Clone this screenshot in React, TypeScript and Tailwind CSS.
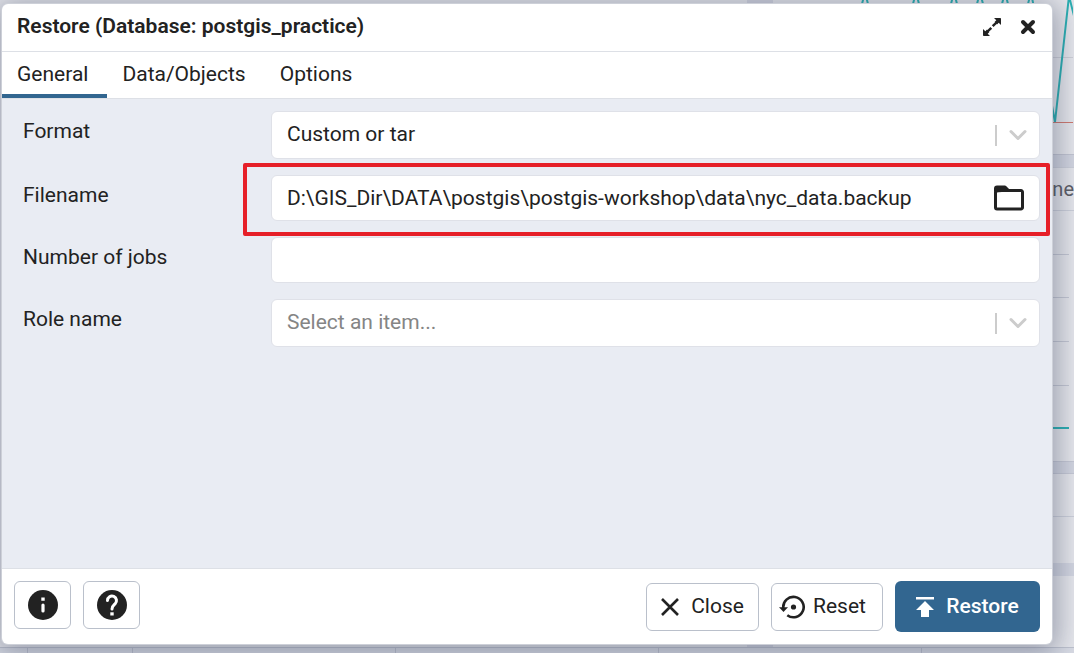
import { ReactNode } from 'react';

function Backdrop() {
  return (
    <div aria-hidden="true" className="absolute inset-0 overflow-hidden bg-[#e6e7ec]">
      <div className="absolute inset-y-0 right-0 flex w-[327px] flex-col border-l-[26px] border-[#d3d5e0]">
        <div className="relative h-[155px] shrink-0 border-b border-[#c3c6d2]">
          <svg className="absolute inset-0" width="300" height="154" fill="none">
            <path d="M0 57.500H300" stroke="#cfd0d8" />
            <path d="M0 122.500H300" stroke="#d0796f" />
            <path d="M89 4l3-12 3 12M140 4l3-12 3 12M178 4l3-12 3 12M204 4l3-12 3 12M229 4l3-12 3 12M255 4l3-12 24 130L296-4l10 40" stroke="#2bb0b3" strokeWidth="2" />
          </svg>
        </div>
        <div className="h-3 shrink-0 bg-[#d3d6e1]" />
        <div className="flex h-[44px] shrink-0 items-center justify-end border-y border-[#cdd0da] font-[Roboto,sans-serif] text-xl text-[#5d5e66]">
          Block out/Timeline
        </div>
        <svg className="shrink-0" width="300" height="250" fill="none">
          <path d="M0 43.500H296M0 86.500H296M0 130.500H296M0 174.500H296" stroke="#c5c8d3" />
          <path d="M0 217H296" stroke="#2bb0b3" strokeWidth="2" />
        </svg>
        <div className="h-[13px] shrink-0 border-y border-[#c6c9d5] bg-[#d3d6e1]" />
        <div className="h-[43px] shrink-0 border-b border-[#cdd0da]" />
        <div className="h-[46px] shrink-0" />
        <div className="h-[13px] shrink-0 bg-[#d3d6e1]" />
      </div>
      <div className="absolute inset-x-0 bottom-0 flex h-[6px] border-t border-[#bfc3cf] bg-[#d9dce5]">
        <div className="w-[28px] border-r border-[#bfc3cf]" />
        <div className="w-[105px] border-r border-[#bfc3cf]" />
        <div className="w-[263px] border-r border-[#bfc3cf]" />
        <div className="w-[263px] border-r border-[#bfc3cf]" />
        <div className="w-[263px] border-r border-[#bfc3cf]" />
      </div>
    </div>
  );
}

const field = 'w-full rounded-md border border-[#dfe1e8] bg-white px-[15px] text-[21px]';
const tab = 'border-b-4 pt-1 pr-[19px] pl-[15px]';

function Row({ id, label, children }: { id: string; label: string; children: ReactNode }) {
  return (
    <div className="grid grid-cols-[248px_1fr] items-start">
      <label htmlFor={id} className="pt-1 leading-8">{label}</label>
      {children}
    </div>
  );
}

function SelectField({ id, value, muted }: { id: string; value: string; muted?: boolean }) {
  return (
    <div className="relative">
      <select id={id} defaultValue={value} className={`${field} h-12 appearance-none ${muted ? 'text-[#858585]' : ''}`}>
        <option>{value}</option>
      </select>
      <div className="pointer-events-none absolute inset-y-0 right-[13px] flex items-center gap-3 text-[#cccccc]">
        <span className="h-[21px] w-[2px] bg-[#cccccc]" />
        <svg width="18" height="12" viewBox="0 0 18 12" fill="none" stroke="currentColor" strokeWidth="3" strokeLinecap="round" strokeLinejoin="round">
          <path d="M2 2.500l7 7 7-7" />
        </svg>
      </div>
    </div>
  );
}

export default function App() {
  return (
    <div className="relative flex min-h-screen flex-col overflow-hidden pt-1 pr-[22px] pb-[9px] pl-[2px] font-[Roboto,sans-serif] text-[21px] text-[#222222]">
      <Backdrop />
      <section role="dialog" aria-labelledby="dialog-title" className="relative flex flex-1 flex-col rounded-md bg-white shadow-[0_0_0_1px_#cdd0d8,0_4px_28px_6px_rgba(40,50,80,0.4)]">
        <header className="flex h-12 items-center border-b border-[#dde0e6] pr-4 pb-0.5 pl-[15px]">
          <h1 id="dialog-title" className="flex-1 font-semibold">Restore (Database: postgis_practice)</h1>
          <div className="flex items-center gap-[18px]">
            <button aria-label="Maximize">
              <svg width="20" height="20" viewBox="0 0 20 20" fill="currentColor">
                <path d="M12 1h6.200q.8 0 .8.800V8l-2.300-2.300-1.700 1.700-2.400-2.400 1.700-1.700z" />
                <path d="M8 19H1.800Q1 19 1 18.200V12l2.300 2.300 1.700-1.700 2.400 2.400-1.700 1.700z" />
                <path d="M14.200 4.200l1.600 1.600-4.200 4.200-1.800-1.800zM5.800 15.800l-1.600-1.600 4.200-4.200 1.800 1.800z" />
              </svg>
            </button>
            <button aria-label="Close dialog">
              <svg width="16" height="16" viewBox="0 0 16 16" fill="none" stroke="currentColor" strokeWidth="4" strokeLinecap="round">
                <path d="M3 3l10 10M13 3L3 13" />
              </svg>
            </button>
          </div>
        </header>
        <div role="tablist" className="flex h-[47px] border-b border-[#dde0e6]">
          <button role="tab" aria-selected="true" className={`${tab} border-[#326690]`}>General</button>
          <button role="tab" aria-selected="false" className={`${tab} border-transparent`}>Data/Objects</button>
          <button role="tab" aria-selected="false" className={`${tab} border-transparent`}>Options</button>
        </div>
        <main className="flex-1 bg-[#e9ecf3] pt-3 pr-3 pl-[21px]">
          <div className="flex flex-col gap-4">
            <Row id="format" label="Format"><SelectField id="format" value="Custom or tar" /></Row>
            <Row id="filename" label="Filename">
              <div className="relative">
                <input id="filename" defaultValue="D:\GIS_Dir\DATA\postgis\postgis-workshop\data\nyc_data.backup" className={`${field} h-[46px] pr-16`} />
                <button aria-label="Select file" className="absolute inset-y-0 right-[15px]">
                  <svg width="32" height="26" viewBox="0 0 32 26" fill="none" stroke="currentColor" strokeWidth="3" strokeLinejoin="round">
                    <path d="M4 5.500h24a1.500 1.500 0 0 1 1.500 1.500v15.500A1.500 1.500 0 0 1 28 24H4a1.500 1.500 0 0 1-1.500-1.500v-15.500Z" />
                    <path d="M2.500 6V3.500A1.500 1.500 0 0 1 4 2h8l3 3z" fill="currentColor" />
                  </svg>
                </button>
                <div className="pointer-events-none absolute -top-3 -right-[10px] -bottom-[15px] -left-7 rounded-xs border-4 border-[#e61f28]" />
              </div>
            </Row>
            <Row id="jobs" label="Number of jobs"><input id="jobs" className={`${field} h-[46px]`} /></Row>
            <Row id="role" label="Role name"><SelectField id="role" value="Select an item..." muted /></Row>
          </div>
        </main>
        <footer className="flex items-center gap-3 border-t border-[#dde0e6] p-3">
          <div className="flex flex-1 gap-3 self-start">
            <button aria-label="Information" className="flex h-12 w-[57px] items-center justify-center rounded-md border border-[#bac0cb]">
              <svg width="30" height="30" viewBox="0 0 30 30"><circle cx="15" cy="15" r="15" fill="#222222" /><path d="M15 15v6" stroke="white" strokeWidth="3.200" strokeLinecap="round" /><path d="M13.300 7.500h3.400v3.200h-3.400z" fill="white" /></svg>
            </button>
            <button aria-label="Help" className="flex h-12 w-[57px] items-center justify-center rounded-md border border-[#bac0cb]">
              <svg width="30" height="30" viewBox="0 0 30 30"><circle cx="15" cy="15" r="15" fill="#222222" /><path d="M10.500 10.500a4.500 4.500 0 1 1 7.600 3.300c-1.800 1.700-3.100 2.500-3.100 5.200" fill="none" stroke="white" strokeWidth="3" strokeLinecap="round" /><path d="M13.300 22.300h3.400v3.200h-3.400z" fill="white" /></svg>
            </button>
          </div>
          <button className="flex h-12 w-[113px] items-center justify-center gap-3 rounded-md border border-[#bac0cb]">
            <svg width="18" height="18" viewBox="0 0 18 18" stroke="currentColor" strokeWidth="2.600"><path d="M1 1l16 16M17 1L1 17" /></svg>
            Close
          </button>
          <button className="flex h-12 w-[112px] items-center gap-2 rounded-md border border-[#bac0cb] pl-[7px]">
            <svg width="26" height="24" viewBox="0 0 26 24" fill="none" stroke="currentColor" strokeWidth="2.600"><path d="M4.300 13a10.200 10.200 0 1 1 4 7.200" /><path d="M0 12.300h9l-4.500 4.700z" fill="currentColor" stroke="none" /><circle cx="14.500" cy="12" r="2.600" fill="currentColor" stroke="none" /></svg>
            Reset
          </button>
          <button className="flex h-[51px] w-[145px] items-center justify-center gap-3 rounded-md bg-[#326690] font-medium text-white">
            <svg width="18" height="20" viewBox="0 0 18 20" fill="currentColor"><path d="M0 0h18v2.500H0zM9 4l9 9h-5v7H5v-7H0z" /></svg>
            Restore
          </button>
        </footer>
      </section>
    </div>
  );
}
